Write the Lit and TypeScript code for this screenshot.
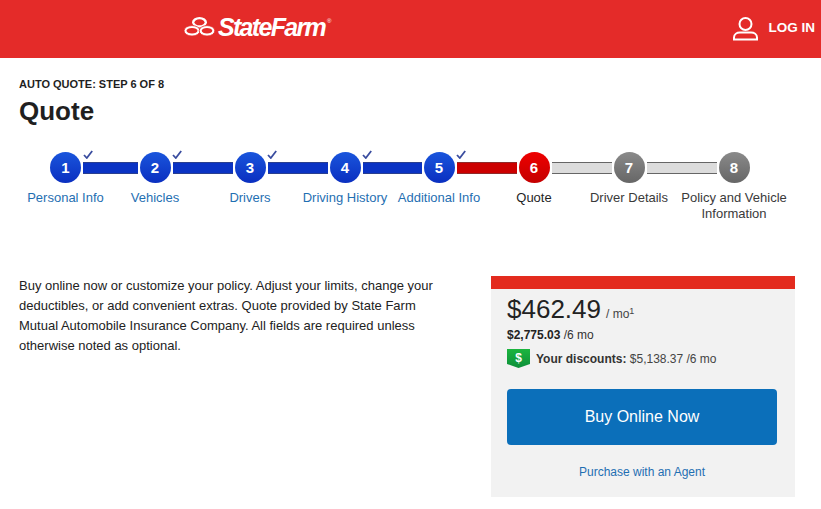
import { LitElement, html, css, svg } from "lit";
import { customElement } from "lit/decorators.js";

type State = "done" | "current" | "todo";
type Step = { n: number; label: string[]; w: number; state: State };

const steps: Step[] = [
  { n: 1, label: ["Personal Info"], w: 91, state: "done" },
  { n: 2, label: ["Vehicles"], w: 88, state: "done" },
  { n: 3, label: ["Drivers"], w: 102, state: "done" },
  { n: 4, label: ["Driving History"], w: 88, state: "done" },
  { n: 5, label: ["Additional Info"], w: 100, state: "done" },
  { n: 6, label: ["Quote"], w: 90, state: "current" },
  { n: 7, label: ["Driver Details"], w: 100, state: "todo" },
  { n: 8, label: ["Policy and Vehicle", "Information"], w: 110, state: "todo" },
];

@customElement("app-root")
export class AppRoot extends LitElement {
  static styles = css`
    :host {
      display: block;
      width: 821px;
      height: 509px;
      background: #fff;
      overflow: hidden;
      font-family: "Liberation Sans", Arial, sans-serif;
      color: #1f1f1f;
    }
    .header {
      height: 58px;
      background: #e42b29;
      display: flex;
      align-items: center;
      justify-content: space-between;
      padding: 0 6px 0 184px;
      box-sizing: border-box;
      color: #fff;
    }
    .logo {
      display: flex;
      align-items: center;
      gap: 3px;
      margin-bottom: 4px;
    }
    .logo svg {
      margin-bottom: 2px;
    }
    .logo-text {
      font-size: 25px;
      font-weight: 700;
      font-style: italic;
      letter-spacing: -1.7px;
      line-height: 26px;
    }
    .logo-text sup {
      font-size: 6px;
      font-style: normal;
      font-weight: 400;
      letter-spacing: 0;
      vertical-align: 13px;
      line-height: 0;
      margin-left: 2px;
    }
    .login {
      display: flex;
      align-items: center;
      gap: 11px;
      font-size: 13.5px;
      font-weight: 700;
    }
    .login span {
      margin-bottom: 3px;
    }
    .main {
      padding: 20px 0 0 19px;
    }
    .eyebrow {
      font-size: 11px;
      font-weight: 700;
      line-height: 13px;
      color: #1f1f1f;
    }
    h1 {
      margin: 4px 0 0;
      font-size: 26px;
      font-weight: 700;
      line-height: 32px;
      color: #1f1f1f;
    }
    .stepper {
      display: flex;
      margin-top: 25px;
      margin-left: 1px;
    }
    .step {
      display: flex;
      flex-direction: column;
      align-items: center;
      flex: none;
    }
    .track {
      position: relative;
      align-self: stretch;
      display: flex;
      align-items: center;
      gap: 2px;
      height: 31px;
    }
    .bar {
      flex: 1;
      height: 12px;
      box-sizing: border-box;
      border-top: 1px solid #666;
      border-bottom: 1px solid #666;
      background: #dcdcdc;
    }
    .bar.done {
      background: #0a33c4;
      border-color: #2a3f8f;
    }
    .bar.current {
      background: #cc0000;
      border-color: #8f2a2a;
    }
    .bar.none {
      visibility: hidden;
    }
    .dot {
      flex: none;
      width: 31px;
      height: 31px;
      border-radius: 50%;
      display: flex;
      align-items: center;
      justify-content: center;
      color: #fff;
      font-size: 15px;
      font-weight: 700;
      background: linear-gradient(#1a55dc, #0a2fc0);
    }
    .dot.current {
      background: linear-gradient(#ee0000, #c40000);
    }
    .dot.todo {
      background: linear-gradient(#8a8a8a, #666);
    }
    .check {
      position: absolute;
      top: -2px;
      left: calc(50% + 17px);
    }
    .label {
      margin-top: 7px;
      font-size: 13px;
      line-height: 16px;
      text-align: center;
      white-space: nowrap;
      color: #3a3a3a;
    }
    .label.done {
      color: #1f6fb2;
    }
    .label.current {
      color: #1f1f1f;
    }
    .content {
      display: flex;
      justify-content: space-between;
      align-items: flex-start;
      margin-top: 54px;
      padding-right: 26px;
    }
    .intro {
      margin: 0;
      width: 430px;
      font-size: 13px;
      line-height: 20px;
      color: #222;
    }
    .panel {
      width: 304px;
      height: 221px;
      background: #f2f2f2;
      border-top: 13px solid #e32b1e;
      box-sizing: border-box;
      padding: 3px 18px 0 16px;
    }
    .price {
      display: flex;
      align-items: baseline;
      gap: 5px;
      font-size: 26px;
      line-height: 34px;
      color: #222;
    }
    .price small {
      font-size: 12px;
      color: #444;
    }
    .price sup {
      font-size: 9px;
      vertical-align: 4px;
      line-height: 0;
    }
    .six {
      font-size: 12px;
      line-height: 16px;
      margin-top: -4px;
      color: #333;
    }
    .six b {
      color: #222;
    }
    .disc {
      display: flex;
      align-items: center;
      gap: 6px;
      margin-top: 6px;
      font-size: 12px;
      line-height: 16px;
      color: #444;
    }
    .disc b {
      color: #333;
    }
    .buy {
      display: block;
      width: 270px;
      height: 56px;
      margin-top: 21px;
      border: 0;
      padding: 0;
      border-radius: 4px;
      background: #0b6fba;
      color: #fff;
      font: 16px "Liberation Sans", Arial, sans-serif;
    }
    .agent {
      margin-top: 19px;
      text-align: center;
      font-size: 12px;
      line-height: 16px;
      color: #1f6fb2;
    }
  `;

  private renderStep(s: Step, i: number) {
    const left = i > 0 ? s.state : "none";
    const next = steps[i + 1];
    const right = next ? next.state : "none";
    return html`
      <div class="step" style="width:${s.w}px">
        <div class="track">
          <div class="bar ${left}"></div>
          <div class="dot ${s.state}">${s.n}</div>
          <div class="bar ${right}"></div>
          ${s.state === "done"
            ? html`<svg class="check" width="10" height="9" viewBox="0 0 10 9">
                <path d="M1 5l2.8 3L9.2 1" fill="none" stroke="#3a4d9f" stroke-width="1.8" />
              </svg>`
            : null}
        </div>
        <div class="label ${s.state}">${s.label.map((l) => html`<div>${l}</div>`)}</div>
      </div>
    `;
  }

  private renderOvals() {
    return svg`
      <ellipse cx="15.500" cy="5.300" rx="7.500" ry="5.300" fill="#fff"/>
      <ellipse cx="15.500" cy="5.300" rx="5" ry="3" fill="#e42b29"/>
      <ellipse cx="8" cy="13.800" rx="8" ry="5.200" fill="#fff" stroke="#e42b29" stroke-width="0.800"/>
      <ellipse cx="8" cy="13.800" rx="5.500" ry="2.800" fill="#e42b29"/>
      <ellipse cx="23" cy="13.800" rx="7.800" ry="5.200" fill="#fff" stroke="#e42b29" stroke-width="0.800"/>
      <ellipse cx="23" cy="13.800" rx="5.300" ry="2.800" fill="#e42b29"/>
    `;
  }

  render() {
    return html`
      <div class="header">
        <div class="logo">
          <svg width="31" height="19" viewBox="0 0 31 19">${this.renderOvals()}</svg>
          <span class="logo-text">StateFarm<sup>®</sup></span>
        </div>
        <div class="login">
          <svg width="25" height="24" viewBox="0 0 25 24" fill="none" stroke="#fff" stroke-width="2">
            <circle cx="12.5" cy="7" r="6" />
            <path d="M1 22.5v-2c0-3.500 3-5 6-5h11c3 0 6 1.500 6 5v2z" />
          </svg>
          <span>LOG IN</span>
        </div>
      </div>
      <div class="main">
        <div class="eyebrow">AUTO QUOTE: STEP 6 OF 8</div>
        <h1>Quote</h1>
        <div class="stepper">${steps.map((s, i) => this.renderStep(s, i))}</div>
        <div class="content">
          <p class="intro">
            Buy online now or customize your policy. Adjust your limits, change your<br />
            deductibles, or add convenient extras. Quote provided by State Farm<br />
            Mutual Automobile Insurance Company. All fields are required unless<br />
            otherwise noted as optional.
          </p>
          <div class="panel">
            <div class="price"><span>$462.49</span><small>/ mo<sup>1</sup></small></div>
            <div class="six"><b>$2,775.03</b> /6 mo</div>
            <div class="disc">
              <svg width="23" height="19" viewBox="0 0 23 19">
                <defs>
                  <linearGradient id="g" x1="0" y1="0" x2="0" y2="1">
                    <stop offset="0" stop-color="#1cb53f" />
                    <stop offset="1" stop-color="#0d8f3a" />
                  </linearGradient>
                </defs>
                <path d="M0 0h23v15l-11.500 4L0 15z" fill="url(#g)" />
                <text x="11.5" y="12.5" text-anchor="middle" font-size="12" font-weight="700" fill="#fff" font-family="Liberation Sans">$</text>
              </svg>
              <span><b>Your discounts:</b> $5,138.37 /6 mo</span>
            </div>
            <button class="buy">Buy Online Now</button>
            <div class="agent">Purchase with an Agent</div>
          </div>
        </div>
      </div>
    `;
  }
}
